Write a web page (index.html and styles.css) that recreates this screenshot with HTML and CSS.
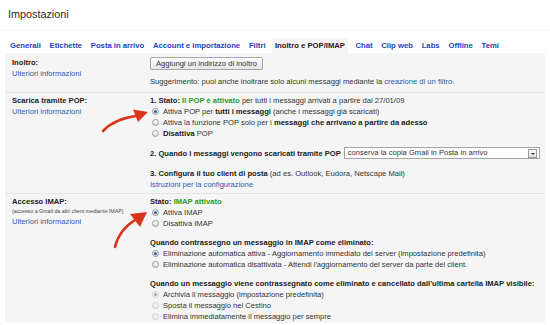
FILE: index.html
```html
<!DOCTYPE html>
<html lang="it">
<head>
    <meta charset="UTF-8">
    <title>Impostazioni</title>
    <link rel="stylesheet" href="styles.css">
</head>
<body>

    <!-- titolo -->
    <div class="title">Impostazioni</div>

    <!-- schede -->
    <div class="tabs">
        <a href="#">Generali</a>
        <a href="#">Etichette</a>
        <a href="#">Posta in arrivo</a>
        <a href="#">Account e importazione</a>
        <a href="#">Filtri</a>
        <a href="#" class="active">Inoltro e POP/IMAP</a>
        <a href="#">Chat</a>
        <a href="#">Clip web</a>
        <a href="#">Labs</a>
        <a href="#">Offline</a>
        <a href="#">Temi</a>
    </div>

    <div class="panel">
        <!-- inoltro -->
        <div class="row first">
            <div class="label">
                <b>Inoltro:</b>
                <a href="#">Ulteriori informazioni</a>
            </div>
            <div class="content">
                <button class="btn">Aggiungi un indirizzo di inoltro</button>
                <div class="hint">Suggerimento: puoi anche inoltrare solo alcuni messaggi mediante la <a href="#">creazione di un filtro.</a></div>
            </div>
        </div>

        <!-- pop -->
        <div class="row pop">
            <div class="label">
                <b>Scarica tramite POP:</b>
                <a href="#">Ulteriori informazioni</a>
            </div>
            <div class="content">
                <div class="line"><b>1. Stato: <span class="ok">Il POP è attivato</span></b> per tutti i messaggi arrivati a partire dal 27/01/09</div>
                <div class="opt"><span class="radio on"></span><span>Attiva POP per <b>tutti i messaggi</b> (anche i messaggi già scaricati)</span></div>
                <div class="opt"><span class="radio"></span><span>Attiva la funzione POP solo per i <b>messaggi che arrivano a partire da adesso</b></span></div>
                <div class="opt"><span class="radio"></span><span><b>Disattiva</b> POP</span></div>

                <div class="line step two"><b>2. Quando i messaggi vengono scaricati tramite POP</b>
                    <span class="select">conserva la copia Gmail in Posta in arrivo<span class="arrow"></span></span>
                </div>

                <div class="line step three"><b>3. Configura il tuo client di posta</b> (ad es. Outlook, Eudora, Netscape Mail)</div>
                <a href="#" class="line">Istruzioni per la configurazione</a>
            </div>
        </div>

        <!-- imap -->
        <div class="row imap">
            <div class="label">
                <b>Accesso IMAP:</b>
                <span class="small">(accesso a Gmail da altri client mediante IMAP)</span>
                <a href="#">Ulteriori informazioni</a>
            </div>
            <div class="content">
                <div class="line"><b>Stato: <span class="ok">IMAP attivato</span></b></div>
                <div class="opt"><span class="radio on"></span><span>Attiva IMAP</span></div>
                <div class="opt"><span class="radio"></span><span>Disattiva IMAP</span></div>

                <div class="line step"><b>Quando contrassegno un messaggio in IMAP come eliminato:</b></div>
                <div class="opt"><span class="radio on"></span><span>Eliminazione automatica attiva - Aggiornamento immediato del server (impostazione predefinita)</span></div>
                <div class="opt"><span class="radio"></span><span>Eliminazione automatica disattivata - Attendi l'aggiornamento del server da parte del client.</span></div>

                <div class="line step"><b>Quando un messaggio viene contrassegnato come eliminato e cancellato dall'ultima cartella IMAP visibile:</b></div>
                <div class="opt"><span class="radio on off"></span><span>Archivia il messaggio (impostazione predefinita)</span></div>
                <div class="opt"><span class="radio off"></span><span>Sposta il messaggio nel Cestino</span></div>
                <div class="opt"><span class="radio off"></span><span>Elimina immediatamente il messaggio per sempre</span></div>
            </div>
        </div>
    </div>

    <!-- frecce rosse sopra il contenuto -->
    <svg class="arrows" width="550" height="325" viewBox="0 0 550 325">
        <path d="M103 131 Q114 119 136 116" fill="none" stroke="#d9341c" stroke-width="2.6" stroke-linecap="round"/>
        <polygon points="148,112 133,109.5 138,122" fill="#d9341c"/>
        <path d="M115 247 Q119 230 135 220" fill="none" stroke="#d9341c" stroke-width="2.6" stroke-linecap="round"/>
        <polygon points="147,212 130,214 140,227" fill="#d9341c"/>
    </svg>

</body>
</html>
```

FILE: styles.css
```css
/* base */
body {
    margin: 0;
    width: 550px;
    height: 325px;
    font-family: "Liberation Sans", Arial, sans-serif;
    font-size: 7.6px;
    color: #333;
    background: #fff;
    position: relative;
    overflow: hidden;
}

a {
    color: #2a5db0;
    text-decoration: none;
}

b {
    color: #222;
}

/* titolo */
.title {
    padding: 6px 8px 0;
    font-size: 10.8px;
    line-height: 16px;
    color: #2a2a2a;
}

/* schede */
.tabs {
    margin-top: 8px;
    border-top: 1px solid #f2f2f2;
    padding: 7px 0 0 6px;
    display: flex;
    height: 15px;
}

.tabs a {
    padding: 0 4.4px;
    font-size: 7.7px;
    line-height: 15px;
    font-weight: bold;
    color: #2244bb;
}

.tabs a:first-child {
    padding-left: 4px;
}

.tabs a.active {
    background: #f5f5f5;
    color: #222;
    padding: 0 3px;
    margin: 0 3px 0 2px;
}

/* pannello */
.panel {
    margin: 0 5px;
    background: #f5f5f5;
    padding-bottom: 1px;
}

.row {
    display: grid;
    grid-template-columns: 145px 1fr;
    border-top: 1px solid #e4e4e4;
    padding: 2px 0 3px;
    line-height: 11px;
}

.row.first {
    border-top: none;
    padding: 4px 0 5px;
}

.row.imap {
    padding-bottom: 0;
}

.label {
    padding-left: 7px;
    display: flex;
    flex-direction: column;
    align-items: flex-start;
}

.label .small {
    font-size: 5.3px;
    line-height: 9px;
    color: #444;
}

.content {
    display: flex;
    flex-direction: column;
    align-items: flex-start;
}

.btn {
    font-family: inherit;
    font-size: 7.6px;
    height: 13px;
    padding: 0 5px;
    border: 1px solid #a8a8a8;
    border-radius: 2px;
    background: linear-gradient(#fdfdfd, #e6e6e6);
    color: #333;
    line-height: 11px;
}

.hint {
    margin-top: 6px;
}

.line {
    white-space: nowrap;
}

.ok {
    color: #2f9a2f;
}

.step {
    margin-top: 8px;
}

.step.three {
    margin-top: 9px;
}

.two {
    display: flex;
    align-items: center;
    gap: 3px;
    align-self: stretch;
    padding-right: 5px;
}

.select {
    position: relative;
    flex: 1;
    height: 10px;
    line-height: 10px;
    border: 1px solid #a5a5a5;
    background: #fff;
    padding-left: 3px;
    color: #333;
}

.select .arrow {
    position: absolute;
    right: 2px;
    top: 1px;
    width: 7px;
    height: 7px;
    border: 1px solid #999;
    background: linear-gradient(#fafafa, #e0e0e0);
}

.select .arrow::after {
    content: "";
    position: absolute;
    left: 1.5px;
    top: 2.5px;
    border-left: 2px solid transparent;
    border-right: 2px solid transparent;
    border-top: 2px solid #333;
}

/* opzioni */
.opt {
    display: flex;
    align-items: center;
    white-space: nowrap;
}

.radio {
    width: 5px;
    height: 5px;
    border: 1px solid #9a9a9a;
    border-radius: 50%;
    background: linear-gradient(#fff, #dcdcdc);
    margin: 0 4px 0 2px;
    position: relative;
    flex: none;
}

.radio.on::after {
    content: "";
    position: absolute;
    left: 1px;
    top: 1px;
    width: 3px;
    height: 3px;
    border-radius: 50%;
    background: #2d5f9e;
}

.radio.off {
    border-color: #cfcfcf;
    background: #f0f0f0;
}

.radio.on.off::after {
    background: #aaa;
}

/* frecce */
.arrows {
    position: absolute;
    left: 0;
    top: 0;
    pointer-events: none;
}
```
